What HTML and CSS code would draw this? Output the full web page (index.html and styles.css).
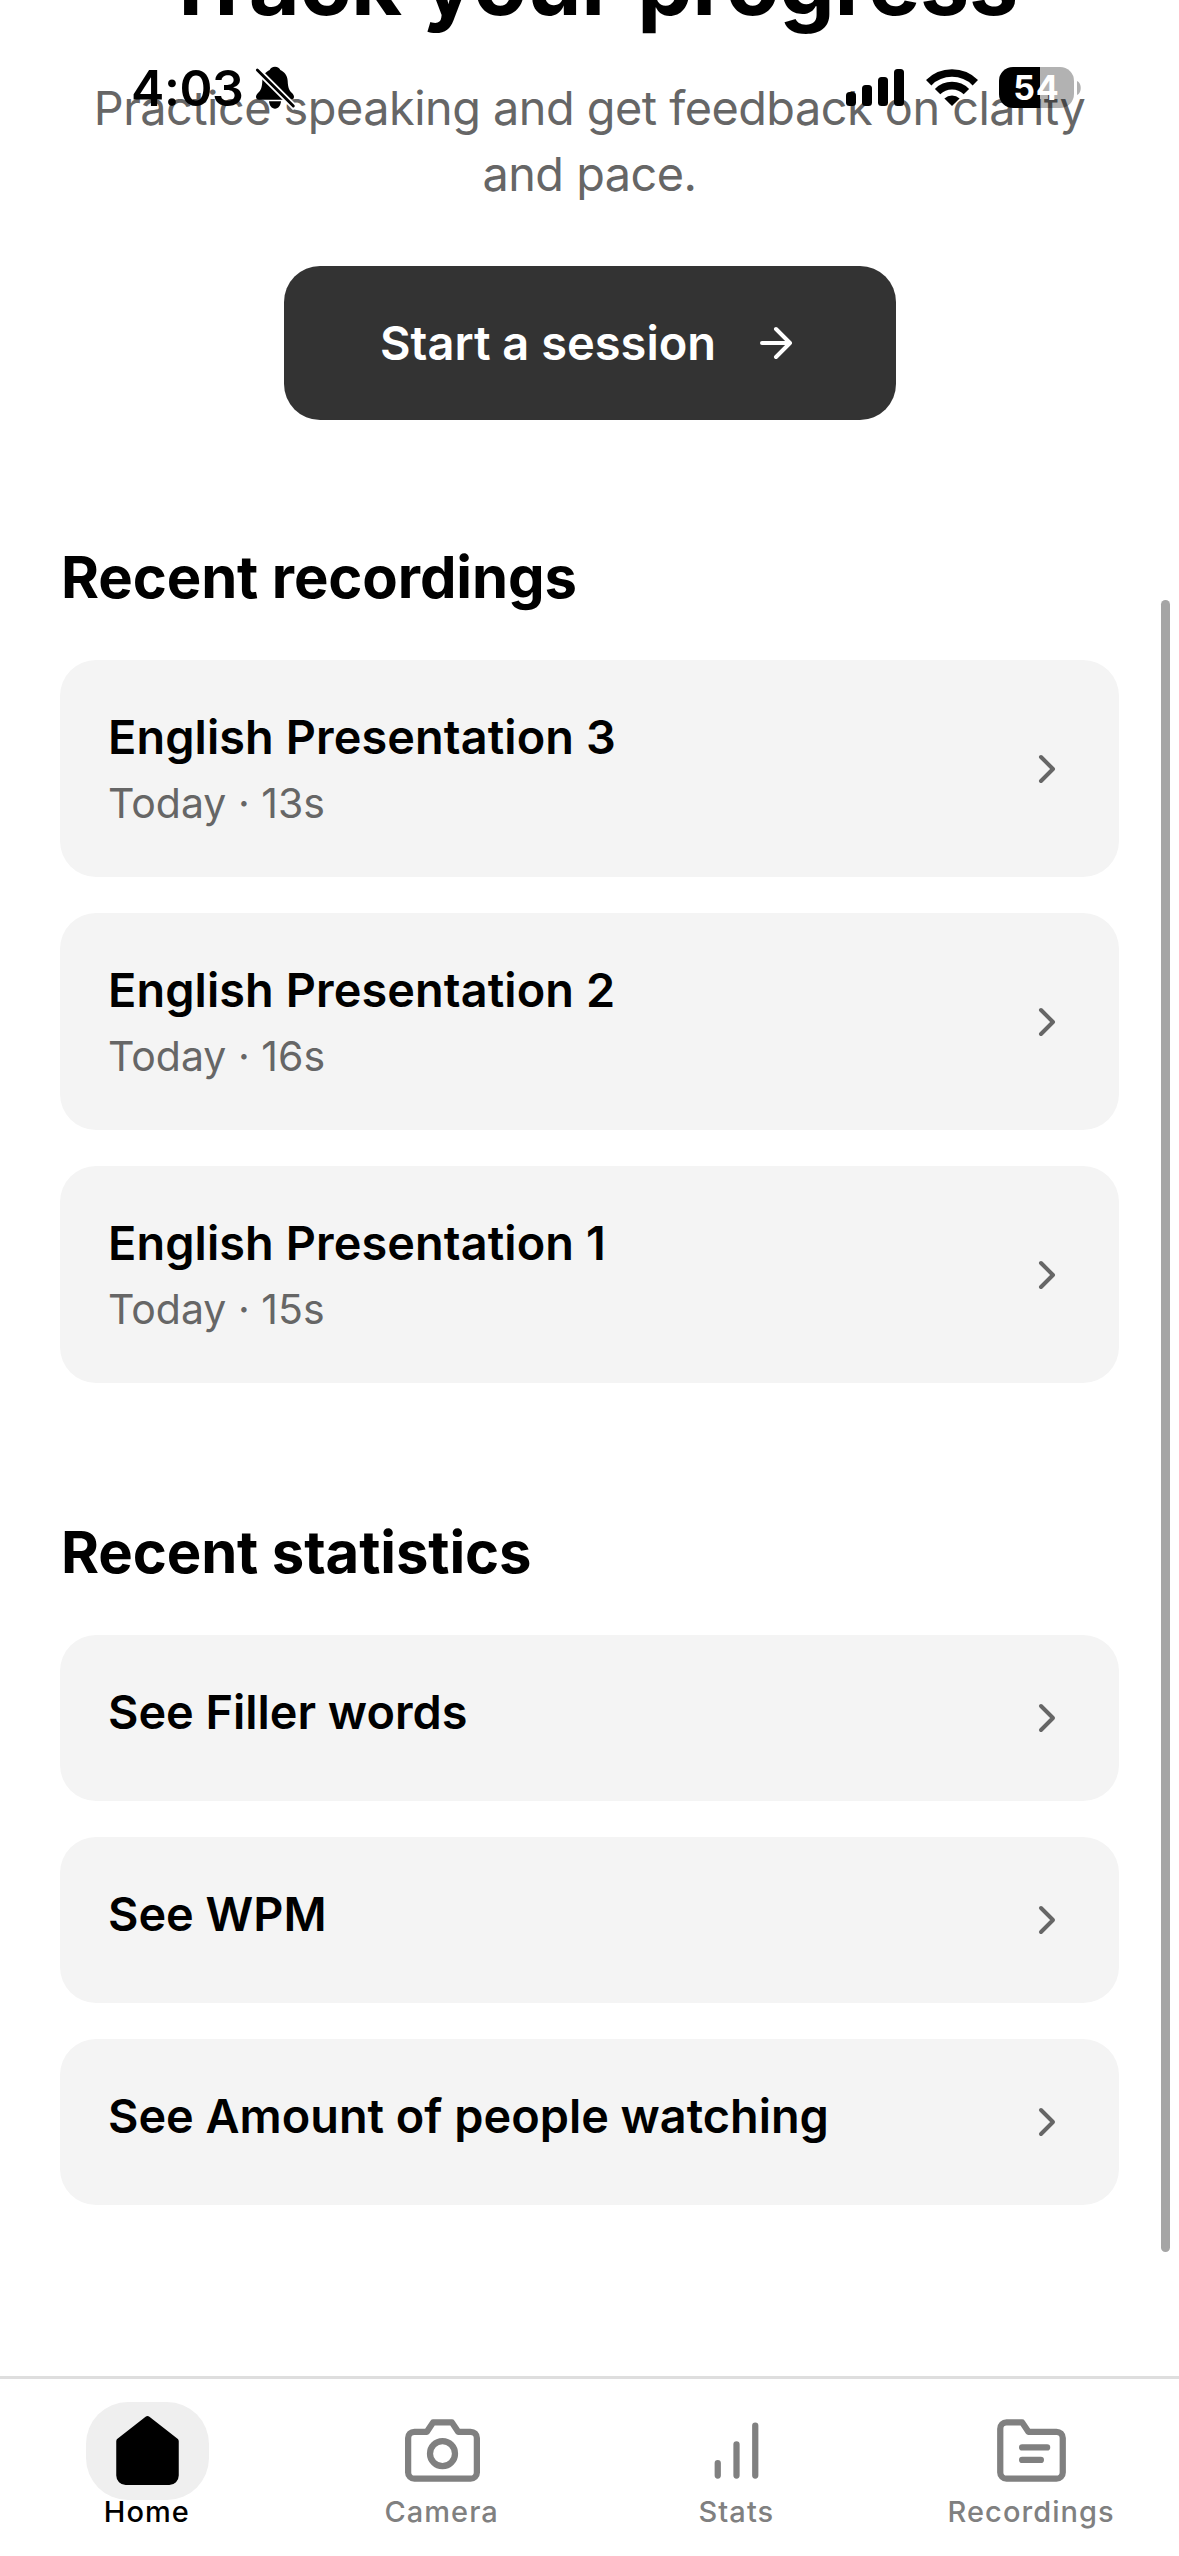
FILE: index.html
```html
<!DOCTYPE html>
<html lang="en">
<head>
<meta charset="utf-8">
<title>Home</title>
<link rel="stylesheet" href="styles.css">
</head>
<body>
<svg class="symbols" aria-hidden="true">
  <symbol id="chevron" viewBox="0 0 24 24"><path d="M9 18l6-6-6-6"/></symbol>
</svg>
<div class="screen">
  <header class="status">
    <div class="status-left">
      <span class="time">4:03</span>
      <svg class="bell" viewBox="0 0 150 150">
        <path d="M75 14c-8 0-14 4-16 10-12 5-21 17-22 32-1 22-4 28-13 37-4 4-6 8-6 12 0 5 4 8 9 8h96c5 0 9-3 9-8 0-4-2-8-6-12-9-9-12-15-13-37-1-15-10-27-22-32-2-6-8-10-16-10z"/>
        <path d="M57 118h36c-1 13-8 22-18 22s-17-9-18-22z"/>
        <path class="slash-gap" d="M14 16L136 138"/>
        <path class="slash" d="M22 24L130 132"/>
      </svg>
    </div>
    <div class="status-right">
      <svg class="signal" viewBox="0 0 58 37">
        <rect x="0" y="23" width="10" height="14" rx="3.5"/>
        <rect x="16" y="16" width="10" height="21" rx="3.5"/>
        <rect x="32" y="8" width="10" height="29" rx="3.5"/>
        <rect x="48" y="0" width="10" height="37" rx="3.5"/>
      </svg>
      <svg class="wifi" viewBox="0 0 52 37">
        <path class="arc" d="M2.7 13.7a33 33 0 0 1 46.6 0"/>
        <path class="arc" d="M11.6 22.6a20.4 20.4 0 0 1 28.8 0"/>
        <path d="M26 37l-7.6-7.6a11.5 11.5 0 0 1 15.2 0z"/>
      </svg>
      <div class="battery"><span class="battery-level">54</span><svg class="nub" viewBox="0 0 4 14"><path d="M0 0c5 2 5 12 0 14z"/></svg></div>
    </div>
  </header>

  <main class="content">
    <section class="hero">
      <h1>Track your progress</h1>
      <p>Practice speaking and get feedback on clarity and pace.</p>
      <a class="start">Start a session
        <svg viewBox="0 0 24 24"><path d="M5 12h14M12 5l7 7-7 7"/></svg>
      </a>
    </section>

    <section class="group recordings">
      <h2>Recent recordings</h2>
      <div class="list">
        <a class="card"><div><h3>English Presentation 3</h3><p>Today · 13s</p></div><svg class="chevron"><use href="#chevron"/></svg></a>
        <a class="card"><div><h3>English Presentation 2</h3><p>Today · 16s</p></div><svg class="chevron"><use href="#chevron"/></svg></a>
        <a class="card"><div><h3>English Presentation 1</h3><p>Today · 15s</p></div><svg class="chevron"><use href="#chevron"/></svg></a>
      </div>
    </section>

    <section class="group">
      <h2>Recent statistics</h2>
      <div class="list">
        <a class="card"><div><h3>See Filler words</h3></div><svg class="chevron"><use href="#chevron"/></svg></a>
        <a class="card"><div><h3>See WPM</h3></div><svg class="chevron"><use href="#chevron"/></svg></a>
        <a class="card"><div><h3>See Amount of people watching</h3></div><svg class="chevron"><use href="#chevron"/></svg></a>
      </div>
    </section>
  </main>
  <div class="scrollbar"></div>

  <nav class="tabs">
    <a class="tab active">
      <span class="pill"><svg viewBox="0 0 24 24"><path d="M3 9l9-7 9 7v11a2 2 0 0 1-2 2H5a2 2 0 0 1-2-2z"/></svg></span>
      <span class="label">Home</span>
    </a>
    <a class="tab">
      <span class="pill"><svg viewBox="0 0 24 24"><path d="M23 19a2 2 0 0 1-2 2H3a2 2 0 0 1-2-2V8a2 2 0 0 1 2-2h4l2-3h6l2 3h4a2 2 0 0 1 2 2z"/><circle cx="12" cy="13" r="4"/></svg></span>
      <span class="label">Camera</span>
    </a>
    <a class="tab">
      <span class="pill"><svg viewBox="0 0 24 24"><path d="M12 20V10M18 20V4M6 20v-4"/></svg></span>
      <span class="label">Stats</span>
    </a>
    <a class="tab">
      <span class="pill"><svg viewBox="0 0 24 24"><path d="M22 19a2 2 0 0 1-2 2H4a2 2 0 0 1-2-2V5a2 2 0 0 1 2-2h5l2 3h9a2 2 0 0 1 2 2zM9 11h8M9 15h6"/></svg></span>
      <span class="label">Recordings</span>
    </a>
  </nav>
</div>
</body>
</html>
```
FILE: styles.css
```css
* { box-sizing: border-box; margin: 0; padding: 0; }

body {
  background: #fff;
  color: #000;
  font-family: Inter, "Liberation Sans", sans-serif;
}

svg { display: block; flex: none; }
.symbols { position: absolute; width: 0; height: 0; }

.screen {
  position: relative;
  display: flex;
  flex-direction: column;
  width: 1179px;
  height: 2556px;
  overflow: hidden;
}

/* Status bar floats above the scrolled content */
.status {
  position: absolute;
  z-index: 2;
  inset: 0 0 auto 0;
  display: flex;
  justify-content: space-between;
  padding: 62px 98px 0 131px;
}
.status-left, .status-right { display: flex; }
.time {
  width: 119px;
  padding-top: 1px;
  font-size: 50px;
  font-weight: 600;
  line-height: 50px;
  letter-spacing: -0.4px;
}
.bell { width: 50px; height: 50px; }
.slash, .slash-gap { fill: none; stroke: #000; stroke-width: 8.5; stroke-linecap: round; }
.slash-gap { stroke: #fff; stroke-width: 19; stroke-linecap: butt; }
.signal { width: 58px; height: 37px; margin-top: 7px; }
.wifi { width: 52px; height: 37px; margin: 7px 21px 0 22px; }
.arc { fill: none; stroke: #000; stroke-width: 7.6; }
.battery { display: flex; align-items: center; gap: 3px; height: 41px; margin-top: 5px; }
.battery-level {
  width: 75px;
  height: 41px;
  border-radius: 14px;
  background: linear-gradient(90deg, #000 41px, rgba(0, 0, 0, 0.3) 41px);
  color: #fff;
  font-size: 34px;
  font-weight: 700;
  line-height: 41px;
  letter-spacing: 1px;
  text-align: center;
}
.nub { width: 4px; height: 14px; opacity: 0.3; }

.content {
  flex: 1;
  min-height: 0;
  margin-top: -70px;
  padding: 0 60px;
}

.hero {
  display: flex;
  flex-direction: column;
  align-items: center;
  text-align: center;
}
h1 {
  font-size: 88px;
  font-weight: 700;
  line-height: 106px;
  letter-spacing: -0.35px;
}
.hero p {
  margin-top: 39px;
  color: #666;
  font-size: 46.8px;
  line-height: 66px;
  letter-spacing: -0.5px;
}
.start {
  display: flex;
  align-items: center;
  gap: 36px;
  width: 612px;
  height: 154px;
  margin: 59px 0 0 1px;
  padding: 0 96px;
  border-radius: 36px;
  background: #333;
  color: #fff;
  font-size: 47px;
  font-weight: 600;
  line-height: 60px;
  white-space: nowrap;
}
.start svg, .chevron {
  width: 48px;
  height: 48px;
  fill: none;
  stroke: #fff;
  stroke-width: 2;
  stroke-linecap: round;
  stroke-linejoin: round;
}

.group { margin-top: 121px; }
.group + .group { margin-top: 133px; }
h2 {
  padding-left: 1px;
  font-size: 58px;
  font-weight: 700;
  line-height: 72px;
  letter-spacing: -0.12px;
}
.list {
  display: flex;
  flex-direction: column;
  gap: 36px;
  margin-top: 47px;
}
.card {
  display: flex;
  align-items: center;
  justify-content: space-between;
  padding: 48px;
  border-radius: 36px;
  background: #f4f4f4;
}
h3 {
  margin-bottom: 12px;
  font-size: 46.8px;
  font-weight: 600;
  line-height: 58px;
}
.recordings h3 { letter-spacing: 0.11px; }
.card p {
  color: #666;
  font-size: 41px;
  line-height: 51px;
}
.card .chevron { stroke: #666; }

.scrollbar {
  position: absolute;
  top: 600px;
  right: 9px;
  width: 9px;
  height: 1652px;
  border-radius: 5px;
  background: #a5a5a5;
}

.tabs {
  display: flex;
  height: 180px;
  border-top: 3px solid #dedede;
  background: #fff;
}
.tab {
  display: flex;
  flex: 1;
  flex-direction: column;
  align-items: center;
  padding-top: 22.75px;
  color: #808080;
}
.pill {
  height: 98px;
  padding: 11px 24px 12px;
  border-radius: 42px;
}
.pill svg {
  width: 75px;
  height: 75px;
  fill: none;
  stroke: currentColor;
  stroke-width: 2;
  stroke-linecap: round;
  stroke-linejoin: round;
}
.label {
  margin: -6px 1px 0 0;
  font-size: 29px;
  font-weight: 500;
  line-height: 36px;
  letter-spacing: 1.05px;
}
.active { color: #000; }
.active .pill { background: #efefef; }
.active .pill svg { fill: currentColor; }
```
